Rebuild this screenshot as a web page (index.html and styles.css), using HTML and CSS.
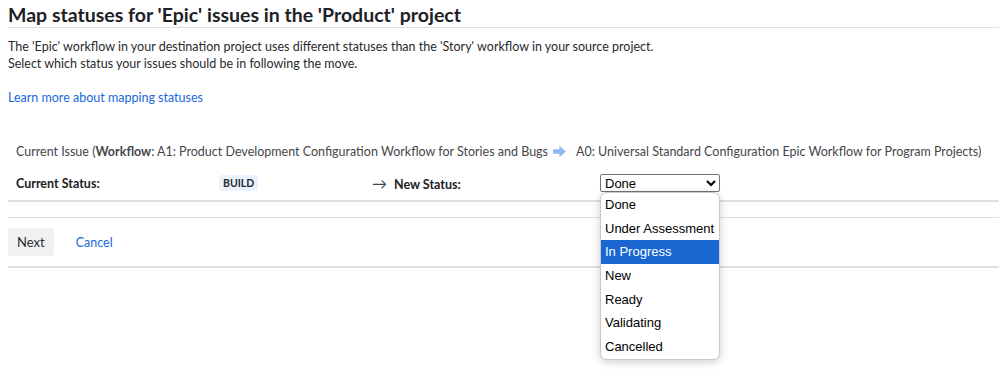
FILE: index.html
```html
<!DOCTYPE html>
<html lang="en">
<head>
  <meta charset="UTF-8">
  <title>Map statuses</title>
  <link rel="stylesheet" href="styles.css">
</head>
<body>

  <!-- Header -->
  <h2 class="page-title">Map statuses for 'Epic' issues in the 'Product' project</h2>
  <p class="intro">The 'Epic' workflow in your destination project uses different statuses than the 'Story' workflow in your source project.<br>Select which status your issues should be in following the move.</p>
  <p class="intro"><a href="#" class="link">Learn more about mapping statuses</a></p>

  <!-- Status mapping -->
  <div class="mapping">
    <div class="workflow-line">
      Current Issue (<b>Workflow</b>: A1: Product Development Configuration Workflow for Stories and Bugs
      <svg class="flow-arrow" width="13" height="11" viewBox="0 0 14 12"><path d="M0 3.5h7V0l7 6-7 6V8.5H0z" fill="#8fb8f0"/></svg>
      A0: Universal Standard Configuration Epic Workflow for Program Projects)
    </div>
    <div class="status-row">
      <div class="label">Current Status:</div>
      <div><span class="lozenge">BUILD</span></div>
      <div class="label"><span class="arrow">&rarr;</span> New Status:</div>
      <div class="select-wrap">
        <select class="status-select">
          <option>Done</option>
          <option>Under Assessment</option>
          <option>In Progress</option>
          <option>New</option>
          <option>Ready</option>
          <option>Validating</option>
          <option>Cancelled</option>
        </select>
        <!-- open dropdown list -->
        <ul class="select-menu">
          <li>Done</li>
          <li>Under Assessment</li>
          <li class="selected">In Progress</li>
          <li>New</li>
          <li>Ready</li>
          <li>Validating</li>
          <li>Cancelled</li>
        </ul>
      </div>
    </div>
  </div>

  <!-- Buttons -->
  <div class="buttons">
    <button class="btn">Next</button>
    <a href="#" class="link cancel">Cancel</a>
  </div>

</body>
</html>
```

FILE: styles.css
```css
html {
  height: 100%;
}

body {
  margin: 0 0 0 8px;
  padding-top: 3px;
  min-height: 100%;
  box-sizing: border-box;
  font-family: Lato, "Noto Sans", sans-serif;
  font-size: 12.5px;
  color: #292a2e;
  background-color: #fff;
}

.page-title {
  margin: 0;
  font-size: 19.5px;
  line-height: 24px;
  font-weight: 700;
  color: #1d2125;
  border-bottom: 1px solid #dcdfe4;
}

.intro {
  margin: 10px 0 0;
  line-height: 17px;
}

.intro + .intro {
  margin-top: 17px;
}

.link {
  color: #1868db;
  text-decoration: none;
}

/* Mapping table */
.mapping {
  margin-top: 37px;
  padding: 0 8px 8px;
  border-bottom: 2px solid #dcdfe4;
}

.workflow-line {
  color: #44464c;
  line-height: 18px;
}

.flow-arrow {
  margin: 0 7px 0 2px;
  vertical-align: -1px;
}

.status-row {
  display: grid;
  grid-template-columns: 203px 153px 228px auto;
  align-items: center;
  margin-top: 13px;
}

.label {
  font-weight: 700;
  color: #1d2125;
}

.arrow {
  font-weight: 400;
  color: #44464c;
  font-size: 15px;
  margin-right: 4px;
}

.lozenge {
  display: inline-block;
  background-color: #e9f2fe;
  color: #292a2e;
  font-size: 10.5px;
  font-weight: 700;
  line-height: 16px;
  padding: 0 4px;
  border-radius: 3px;
}

.select-wrap {
  position: relative;
  width: 120px;
}

.status-select {
  display: block;
  width: 120px;
  height: 18px;
  font-family: "Liberation Sans", Arial, sans-serif;
  font-size: 13px;
  padding: 0;
  border: 1px solid #767676;
  border-radius: 2px;
  background: #fff;
  color: #000;
}

.select-menu {
  position: absolute;
  top: 18px;
  left: 0;
  width: 118px;
  margin: 0;
  padding: 0;
  list-style: none;
  background: #fff;
  border: 1px solid #c8c8c8;
  border-radius: 7px;
  box-shadow: 0 2px 8px rgba(0, 0, 0, 0.2);
  overflow: hidden;
  font-family: "Liberation Sans", Arial, sans-serif;
  font-size: 13px;
  color: #000;
  z-index: 10;
}

.select-menu li {
  height: 23.7px;
  line-height: 23.7px;
  padding-left: 4px;
}

.select-menu li.selected {
  background-color: #1a67d2;
  color: #fff;
}

/* Buttons */
.buttons {
  display: flex;
  align-items: center;
  gap: 22px;
  margin-top: 15px;
  padding: 10px 0;
  border-top: 1px solid #dcdfe4;
  border-bottom: 2px solid #dcdfe4;
}

.btn {
  font-family: inherit;
  font-size: 13px;
  color: #292a2e;
  background-color: #f0f1f2;
  border: none;
  border-radius: 3px;
  height: 28px;
  padding: 0 9px;
}
```
